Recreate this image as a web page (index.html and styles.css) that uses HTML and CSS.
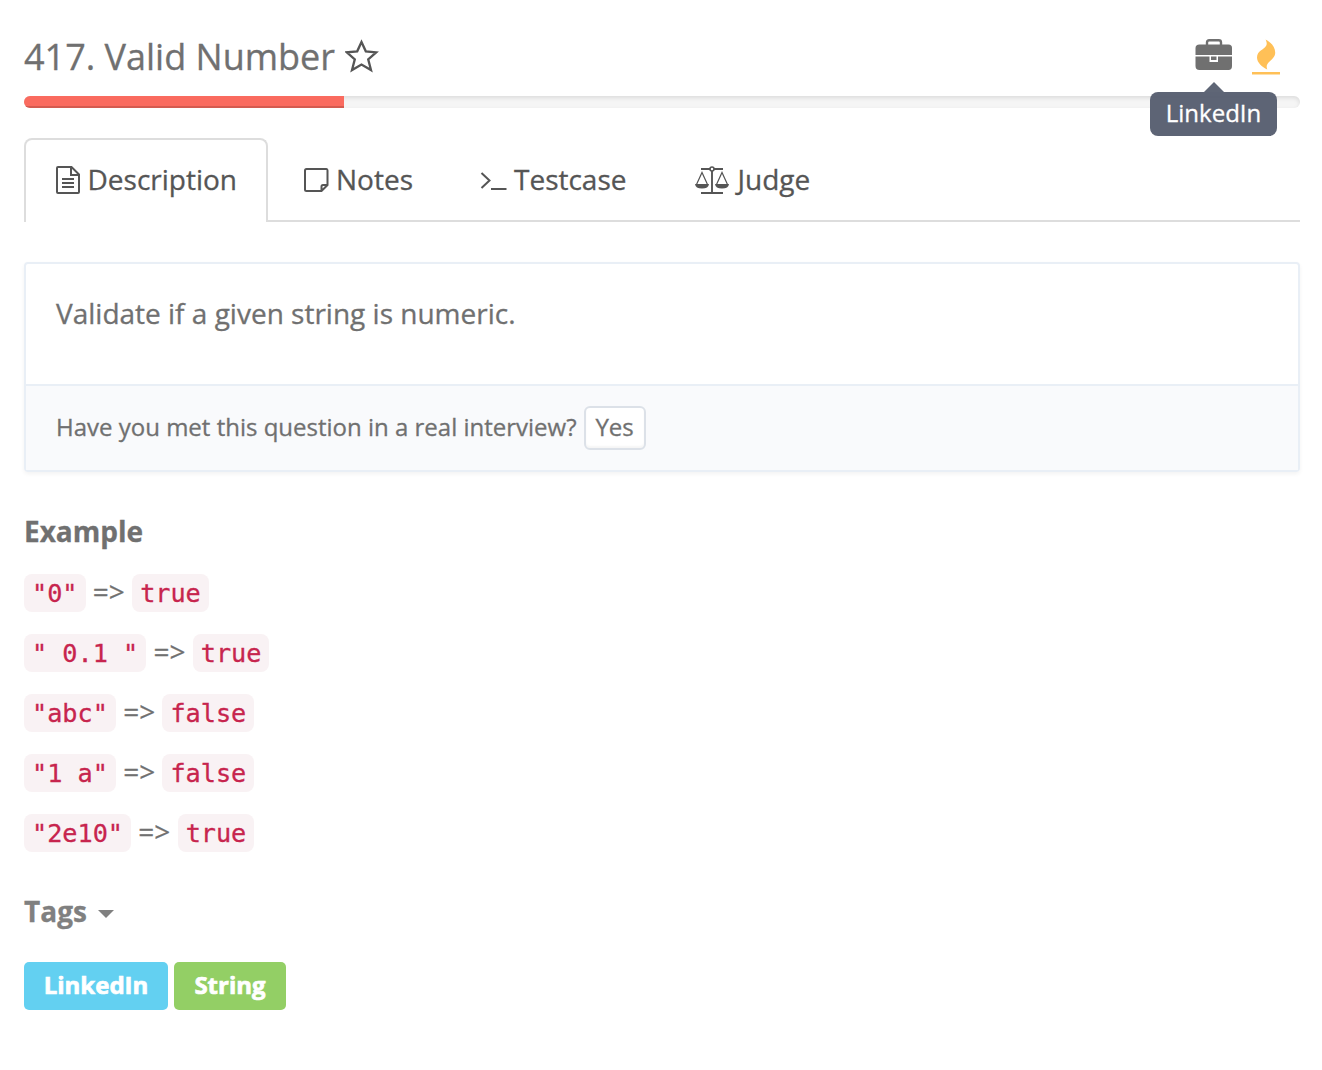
FILE: index.html
```html
<!DOCTYPE html>
<html lang="en">
<head>
<meta charset="utf-8">
<title>417. Valid Number</title>
<link rel="stylesheet" href="styles.css">
</head>
<body>
<main class="page">
  <header class="header">
    <h1 class="title">417. Valid Number</h1>
    <svg class="star" width="34" height="34" viewBox="0 0 34 34"><path d="M16.500 3l4.300 9.300 10.400 1-8 7 2.800 10.700-9.500-5.500L7 31l2.800-10.700-8-7 10.400-1z" fill="none" stroke="#555" stroke-width="2.300"/></svg>
    <div class="actions">
      <div class="company">
        <svg class="briefcase" width="38" height="32" viewBox="0 0 38 32"><path d="M12 6V3.500Q12 1.300 14.200 1.300h9.600Q26 1.300 26 3.500V6" fill="none" stroke="#707070" stroke-width="2.400"/><path d="M4.500 5.500h29q3.500 0 3.500 3.500v7H.5V9q0-3.500 4-3.500z" fill="#707070"/><path d="M.5 17.500h14V23H23v-5.500h14V27q0 4-3.500 4h-29q-4 0-4-4z" fill="#707070"/><path d="M16 17.500h5.500v3.500H16z" fill="#707070"/></svg>
        <div class="tooltip">LinkedIn</div>
      </div>
      <svg class="flame" width="28" height="36" viewBox="0 0 28 36"><path d="M13.500.5C19 3.500 23.400 8 23.200 14c-.2 5.500-6 7.500-8 11.500-.8 1.500-.6 3.200.1 5C10 28 5 23.500 5 18.500c0-7 7-7.500 9.300-12C15.300 4.500 14.300 2 13.500.5z" fill="#ffc057"/><path d="M0 33h28v2.500H0z" fill="#ffc057"/></svg>
    </div>
  </header>
  <div class="progress"><div class="progress-fill"></div></div>

  <nav class="tabs">
    <a class="tab tab-active"><svg width="24" height="28" viewBox="0 0 24 28" fill="none" stroke="#555" stroke-width="2"><path d="M2 1h13.500L23 8.500V26q0 1-1 1H2q-1 0-1-1V2q0-1 1-1zM15 1v8h8M6 13h12M6 17h12M6 21h12"/></svg><span>Description</span></a>
    <a class="tab tab-notes"><svg width="25" height="24" viewBox="0 0 25 24" fill="none" stroke="#555" stroke-width="2"><path d="M2.500 1h20Q23.500 1 23.500 2.500V17l-6 6h-15Q1 23 1 21.500v-19Q1 1 2.500 1zM17.500 23v-4.500q0-1.500 1.500-1.500h4.500"/></svg><span>Notes</span></a>
    <a class="tab tab-test"><svg width="27" height="20" viewBox="0 0 27 20" fill="none" stroke="#555" stroke-width="2"><path d="M1.500 3l8 7.500-8 7.500M11 19h15.500"/></svg><span>Testcase</span></a>
    <a class="tab tab-judge"><svg width="34" height="28" viewBox="0 0 34 28" fill="none" stroke="#555"><path d="M6 3h9M19 3h9M17 5v21.500M6 27h22" stroke-width="1.900"/><circle cx="17" cy="3" r="2" stroke-width="1.600"/><path d="M1.500 18.500l5.500-12 5.500 12M21.500 18.500l5.500-12 5.500 12" stroke-width="1.200"/><path d="M0 18h14q-.5 4.500-7 4.500T0 18zM20 18h14q-.5 4.500-7 4.500T20 18z" fill="#555" stroke="none"/></svg><span>Judge</span></a>
  </nav>

  <section class="card">
    <p class="statement">Validate if a given string is numeric.</p>
    <div class="card-footer"><span class="question">Have you met this question in a real interview?</span><button class="yes">Yes</button></div>
  </section>

  <h2 class="heading">Example</h2>
  <div class="examples">
    <p class="example"><code>"0"</code><span>=&gt;</span><code>true</code></p>
    <p class="example"><code>" 0.1 "</code><span>=&gt;</span><code>true</code></p>
    <p class="example"><code>"abc"</code><span>=&gt;</span><code>false</code></p>
    <p class="example"><code>"1 a"</code><span>=&gt;</span><code>false</code></p>
    <p class="example"><code>"2e10"</code><span>=&gt;</span><code>true</code></p>
  </div>

  <h2 class="heading tags-heading">Tags<svg class="caret" width="16" height="8" viewBox="0 0 16 8"><path d="M0 0h16L8 8z" fill="#808080"/></svg></h2>
  <div class="tags"><span class="tag tag-company">LinkedIn</span><span class="tag tag-topic">String</span></div>
</main>
</body>
</html>
```
FILE: styles.css
```css
* { box-sizing: border-box; }
body { margin: 0; background: #fff; color: #707070; font: 28px/40px "Open Sans", sans-serif; -webkit-text-stroke: .3px; }
h1, h2, p { margin: 0; }
svg { display: block; flex: none; }
.page { padding: 32px 22px 0 24px; }

.header { display: flex; align-items: flex-start; height: 64px; }
.title { font-size: 36px; font-weight: 400; line-height: 50px; }
.star { margin: 7px 0 0 10px; }
.actions { display: flex; margin-left: auto; padding-right: 20px; }
.company { position: relative; margin-right: 19px; }
.briefcase { margin-top: 7px; }
.flame { margin-top: 7px; }
.tooltip { position: absolute; z-index: 2; top: 60px; left: -45px; width: 127px; height: 44px; border-radius: 8px; background: rgba(86, 94, 111, .96); color: #fff; font-size: 24px; line-height: 41px; text-align: center; }
.tooltip::before { content: ""; position: absolute; top: -10px; left: 54px; border: 10px solid transparent; border-top: 0; border-bottom-color: #5f6676; }

.progress { height: 12px; border-radius: 6px; overflow: hidden; background: #f5f5f5; box-shadow: inset 0 2px 4px rgba(0, 0, 0, .1); }
.progress-fill { width: 320px; height: 12px; background: #fa6b5f; box-shadow: inset 0 -2px 0 rgba(0, 0, 0, .15); }

.tabs { display: flex; height: 84px; margin-top: 30px; box-shadow: inset 0 -2px #ddd; }
.tab { display: flex; align-items: center; height: 84px; color: #555; }
.tab span { padding-bottom: 2px; }
.tab-active { width: 244px; padding: 0 0 2px 30px; gap: 7.5px; border: 2px solid #ddd; border-bottom: 0; border-radius: 8px 8px 0 0; background: #fff; }
.tab-notes { margin-left: 36px; gap: 7px; }
.tab-test { margin-left: 67px; gap: 7px; }
.tab-judge { margin-left: 68px; gap: 9px; }

.card { height: 210px; margin-top: 40px; border: 2px solid #e9eff6; border-radius: 4px; box-shadow: 0 2px 4px rgba(0, 0, 0, .05); }
.statement { height: 120px; padding: 29px 30px; }
.card-footer { display: flex; align-items: center; height: 86px; padding-left: 30px; gap: 7px; border-top: 2px solid #e9eff6; background: #f9fafc; font-size: 24px; }
.question { padding-bottom: 2px; }
.yes { width: 62px; height: 44px; padding: 0 0 2px; border: 2px solid #dce1e8; border-radius: 6px; background: #fff; box-shadow: inset 0 -2px 2px rgba(0, 0, 0, .04); color: #707070; font: 24px/38px "Open Sans", sans-serif; -webkit-text-stroke: inherit; }

.heading { margin-top: 39px; font-size: 28px; font-weight: 700; line-height: 40px; }
.examples { display: grid; gap: 20px; margin-top: 20px; }
.example { display: flex; align-items: flex-start; height: 40px; }
.example span { margin: 0 7.3px; }
.example code { height: 38px; margin-top: 3px; padding: 0 8px; border-radius: 8px; background: #f9f2f4; color: #c7254e; font: 25.2px/39px "DejaVu Sans Mono", monospace; white-space: pre; }

.tags-heading { display: flex; align-items: center; margin-top: 40px; color: #808080; }
.caret { margin: 5px 0 0 11px; }
.tags { display: flex; gap: 6px; margin-top: 31px; }
.tag { height: 48px; border-radius: 5px; color: #fff; font-size: 24px; font-weight: 700; line-height: 46px; text-align: center; -webkit-text-stroke: .7px; }
.tag-company { width: 144px; background: #63d0f1; }
.tag-topic { width: 112px; background: #93cf65; }
```
